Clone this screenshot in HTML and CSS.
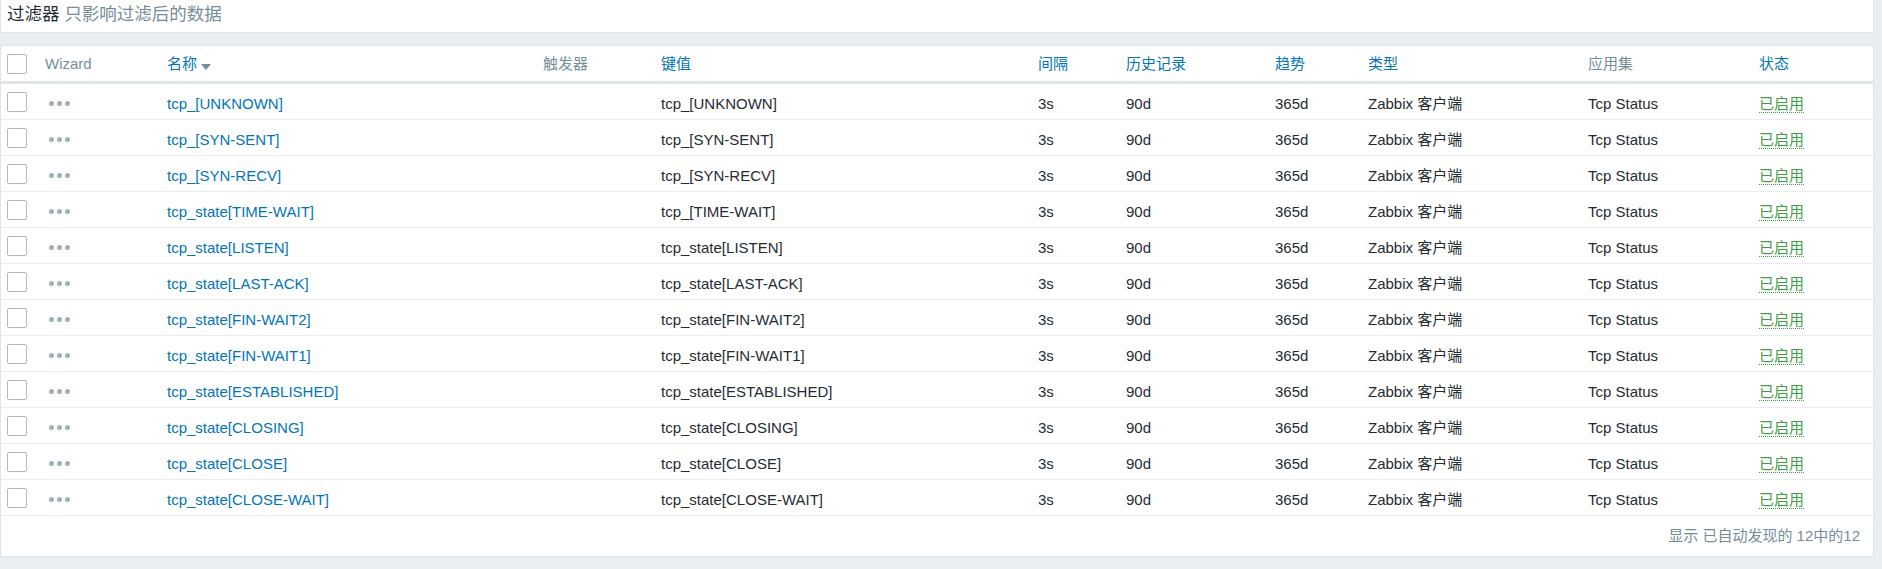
FILE: index.html
```html
<!DOCTYPE html>
<html lang="zh-CN">
<head>
<meta charset="utf-8">
<title>监控项</title>
<link rel="stylesheet" href="styles.css">
</head>
<body>
<div class="page">
  <div class="filter">
    <span class="filter-title">过滤器</span>
    <span class="filter-sub">只影响过滤后的数据</span>
  </div>
  <div class="list">
    <table class="list-table">
      <colgroup>
        <col class="c-cb"><col class="c-wz"><col class="c-name"><col class="c-trig"><col class="c-key">
        <col class="c-int"><col class="c-hist"><col class="c-trend"><col class="c-type"><col class="c-app"><col class="c-status">
      </colgroup>
      <thead>
        <tr>
          <th class="cell-cb"><span class="cb"></span></th>
          <th class="muted">Wizard</th>
          <th><a class="link">名称</a><span class="arrow"></span></th>
          <th class="muted">触发器</th>
          <th><a class="link">键值</a></th>
          <th><a class="link">间隔</a></th>
          <th><a class="link">历史记录</a></th>
          <th><a class="link">趋势</a></th>
          <th><a class="link">类型</a></th>
          <th class="muted">应用集</th>
          <th><a class="link">状态</a></th>
        </tr>
      </thead>
      <tbody>
        <tr><td class="cell-cb"><span class="cb"></span></td><td><span class="dots"><i></i><i></i><i></i></span></td><td><a class="link">tcp_[UNKNOWN]</a></td><td></td><td>tcp_[UNKNOWN]</td><td>3s</td><td>90d</td><td>365d</td><td>Zabbix 客户端</td><td>Tcp Status</td><td><span class="status">已启用</span></td></tr>
        <tr><td class="cell-cb"><span class="cb"></span></td><td><span class="dots"><i></i><i></i><i></i></span></td><td><a class="link">tcp_[SYN-SENT]</a></td><td></td><td>tcp_[SYN-SENT]</td><td>3s</td><td>90d</td><td>365d</td><td>Zabbix 客户端</td><td>Tcp Status</td><td><span class="status">已启用</span></td></tr>
        <tr><td class="cell-cb"><span class="cb"></span></td><td><span class="dots"><i></i><i></i><i></i></span></td><td><a class="link">tcp_[SYN-RECV]</a></td><td></td><td>tcp_[SYN-RECV]</td><td>3s</td><td>90d</td><td>365d</td><td>Zabbix 客户端</td><td>Tcp Status</td><td><span class="status">已启用</span></td></tr>
        <tr><td class="cell-cb"><span class="cb"></span></td><td><span class="dots"><i></i><i></i><i></i></span></td><td><a class="link">tcp_state[TIME-WAIT]</a></td><td></td><td>tcp_[TIME-WAIT]</td><td>3s</td><td>90d</td><td>365d</td><td>Zabbix 客户端</td><td>Tcp Status</td><td><span class="status">已启用</span></td></tr>
        <tr><td class="cell-cb"><span class="cb"></span></td><td><span class="dots"><i></i><i></i><i></i></span></td><td><a class="link">tcp_state[LISTEN]</a></td><td></td><td>tcp_state[LISTEN]</td><td>3s</td><td>90d</td><td>365d</td><td>Zabbix 客户端</td><td>Tcp Status</td><td><span class="status">已启用</span></td></tr>
        <tr><td class="cell-cb"><span class="cb"></span></td><td><span class="dots"><i></i><i></i><i></i></span></td><td><a class="link">tcp_state[LAST-ACK]</a></td><td></td><td>tcp_state[LAST-ACK]</td><td>3s</td><td>90d</td><td>365d</td><td>Zabbix 客户端</td><td>Tcp Status</td><td><span class="status">已启用</span></td></tr>
        <tr><td class="cell-cb"><span class="cb"></span></td><td><span class="dots"><i></i><i></i><i></i></span></td><td><a class="link">tcp_state[FIN-WAIT2]</a></td><td></td><td>tcp_state[FIN-WAIT2]</td><td>3s</td><td>90d</td><td>365d</td><td>Zabbix 客户端</td><td>Tcp Status</td><td><span class="status">已启用</span></td></tr>
        <tr><td class="cell-cb"><span class="cb"></span></td><td><span class="dots"><i></i><i></i><i></i></span></td><td><a class="link">tcp_state[FIN-WAIT1]</a></td><td></td><td>tcp_state[FIN-WAIT1]</td><td>3s</td><td>90d</td><td>365d</td><td>Zabbix 客户端</td><td>Tcp Status</td><td><span class="status">已启用</span></td></tr>
        <tr><td class="cell-cb"><span class="cb"></span></td><td><span class="dots"><i></i><i></i><i></i></span></td><td><a class="link">tcp_state[ESTABLISHED]</a></td><td></td><td>tcp_state[ESTABLISHED]</td><td>3s</td><td>90d</td><td>365d</td><td>Zabbix 客户端</td><td>Tcp Status</td><td><span class="status">已启用</span></td></tr>
        <tr><td class="cell-cb"><span class="cb"></span></td><td><span class="dots"><i></i><i></i><i></i></span></td><td><a class="link">tcp_state[CLOSING]</a></td><td></td><td>tcp_state[CLOSING]</td><td>3s</td><td>90d</td><td>365d</td><td>Zabbix 客户端</td><td>Tcp Status</td><td><span class="status">已启用</span></td></tr>
        <tr><td class="cell-cb"><span class="cb"></span></td><td><span class="dots"><i></i><i></i><i></i></span></td><td><a class="link">tcp_state[CLOSE]</a></td><td></td><td>tcp_state[CLOSE]</td><td>3s</td><td>90d</td><td>365d</td><td>Zabbix 客户端</td><td>Tcp Status</td><td><span class="status">已启用</span></td></tr>
        <tr><td class="cell-cb"><span class="cb"></span></td><td><span class="dots"><i></i><i></i><i></i></span></td><td><a class="link">tcp_state[CLOSE-WAIT]</a></td><td></td><td>tcp_state[CLOSE-WAIT]</td><td>3s</td><td>90d</td><td>365d</td><td>Zabbix 客户端</td><td>Tcp Status</td><td><span class="status">已启用</span></td></tr>
      </tbody>
    </table>
    <div class="paging">显示 已自动发现的 12中的12</div>
  </div>
</div>
</body>
</html>
```

FILE: styles.css
```css
* { box-sizing: border-box; }

html, body {
  margin: 0;
  padding: 0;
  background: #ebeef0;
}

body {
  font-family: "Liberation Sans", Arial, "Noto Sans CJK SC", sans-serif;
  font-size: 15px;
  color: #1f2c33;
}

.page {
  width: 1874px;
  display: flex;
  flex-direction: column;
  gap: 12px;
}

.filter {
  height: 33px;
  background: #fff;
  border: 1px solid #dfe4e7;
  border-top: none;
  padding: 0 6px;
  font-size: 17.5px;
  line-height: 28px;
  white-space: nowrap;
}

.filter-title { color: #1f2c33; }
.filter-sub { color: #768d99; }

.list {
  background: #fff;
  border: 1px solid #dfe4e7;
}

.list-table {
  width: 1872px;
  table-layout: fixed;
  border-collapse: separate;
  border-spacing: 0;
}

.c-cb { width: 38px; }
.c-wz { width: 122px; }
.c-name { width: 376px; }
.c-trig { width: 118px; }
.c-key { width: 377px; }
.c-int { width: 88px; }
.c-hist { width: 149px; }
.c-trend { width: 93px; }
.c-type { width: 220px; }
.c-app { width: 171px; }
.c-status { width: 120px; }

.list-table th {
  height: 38px;
  padding: 0 6px;
  text-align: left;
  font-weight: normal;
  line-height: 18px;
  vertical-align: middle;
  border-bottom: 3px solid #dfe4e7;
  white-space: nowrap;
}

.list-table td {
  height: 36px;
  padding: 4px 6px 0;
  line-height: 18px;
  vertical-align: middle;
  border-bottom: 1px solid #ebeef0;
  white-space: nowrap;
}

.list-table td.cell-cb,
.list-table th.cell-cb {
  padding-top: 0;
}

.muted { color: #768d99; }

.link {
  color: #0275b8;
  text-decoration: none;
}

.arrow {
  display: inline-block;
  width: 0;
  height: 0;
  margin-left: 4px;
  border-left: 5px solid transparent;
  border-right: 5px solid transparent;
  border-top: 6px solid #768d99;
  vertical-align: -1px;
}

.cb {
  display: block;
  width: 20px;
  height: 20px;
  border: 1px solid #acbbc2;
  border-radius: 2px;
  background: #fff;
}

.dots {
  display: flex;
  gap: 3px;
  padding-left: 4px;
}

.dots i {
  display: block;
  width: 5px;
  height: 5px;
  border-radius: 50%;
  background: #9fb0b9;
}

.status {
  color: #429e47;
  border-bottom: 1px dotted #429e47;
}

.paging {
  height: 40px;
  line-height: 40px;
  text-align: right;
  padding-right: 13px;
  color: #768d99;
}
```
